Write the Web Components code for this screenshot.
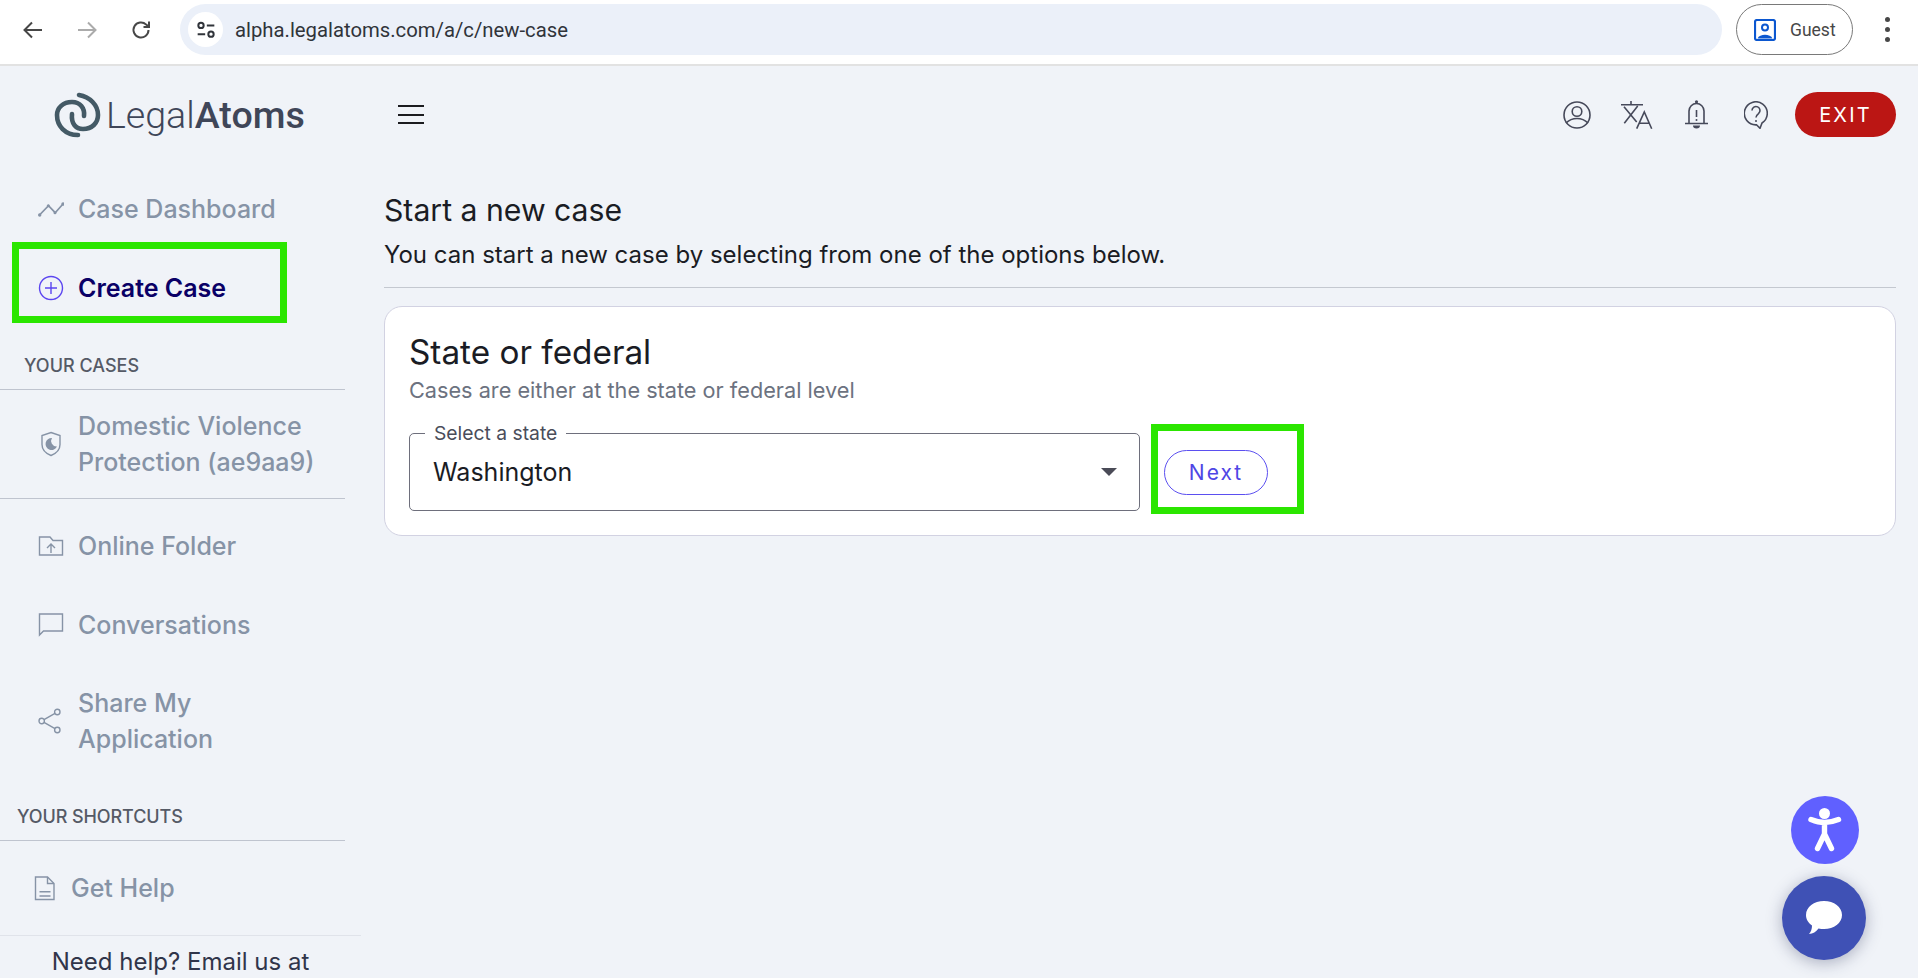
<!doctype html>
<html lang="en">
<head>
<meta charset="utf-8">
<title>LegalAtoms</title>
<style>
html, body { margin: 0; height: 100%; overflow: hidden; background: #f0f3f8; }
body { font-family: Inter, "Noto Sans", sans-serif; }
</style>
</head>
<body>
<browser-bar url="alpha.legalatoms.com/a/c/new-case"></browser-bar>
<app-shell>
  <app-header slot="header"></app-header>
  <side-nav slot="nav">
    <nav-item icon="trend" style="--row:76px">Case Dashboard</nav-item>
    <highlight-box style="--x:12px;--y:-5px;--w:275px;--h:81px"><nav-item icon="plus" active style="--row:82px">Create Case</nav-item></highlight-box>
    <nav-heading style="height:61px">YOUR CASES</nav-heading>
    <nav-item icon="shield" divided style="--row:109px">Domestic Violence<br>Protection (ae9aa9)</nav-item>
    <nav-item icon="folder" style="margin-top:8px">Online Folder</nav-item>
    <nav-item icon="chat" style="margin-top:1px">Conversations</nav-item>
    <nav-item icon="share" style="--row:108px;margin-top:3px">Share My<br>Application</nav-item>
    <nav-heading short style="height:66px">YOUR SHORTCUTS</nav-heading>
    <nav-item icon="doc" tight style="--row:94px">Get Help</nav-item>
    <help-note>Need help? Email us at</help-note>
  </side-nav>
  <new-case-page slot="main"></new-case-page>
</app-shell>
<float-buttons></float-buttons>

<script>
const ICONS = {
  trend: `<path d="M1.500 19l9-9.300 6.700 7L25 8" stroke-width="1.700"/><g stroke="none" fill="#8693a6"><circle cx="1.700" cy="19" r="1.700"/><circle cx="10.300" cy="9.700" r="1.500"/><circle cx="17" cy="16.700" r="1.500"/><circle cx="25" cy="8" r="1.700"/></g>`,
  plus: `<circle cx="13" cy="13" r="11.500"/><path d="M13 7v12M7 13h12"/>`,
  shield: `<path d="M13 1.500l9 3v9c0 5.500-4 9-9 11-5-2-9-5.500-9-11v-9z"/><path d="M14 7a6 6 0 1 0 5 8.500 5.500 5.500 0 0 1-5-8.500z" fill="#8693a6" stroke="none"/>`,
  folder: `<path d="M1.500 4h10.500l3 3.500H24.500V22H1.500z"/><path d="M13 20v-9M9 15l4-4 4 4"/>`,
  chat: `<path d="M1.500 2H24.500V19H5.500L1.500 23z"/>`,
  share: `<circle cx="3.700" cy="13" r="2.700"/><circle cx="19.300" cy="4" r="2.700"/><circle cx="19.300" cy="22" r="2.700"/><path d="M6 11.700L17 5.300M6 14.300L17 20.700"/>`,
  doc: `<path d="M3.500 2H15.500L22 8.500V24.500H3.500z"/><path d="M15.500 2V8.500H22M7.500 16.700h11M7.500 21h11"/>`,
};

const browserBarTemplate = document.createElement("template");
browserBarTemplate.innerHTML = `
<style>
:host {
  display: flex;
  align-items: center;
  box-sizing: border-box;
  height: 66px;
  padding-top: 4px;
  padding-bottom: 9px;
  background: #fff;
  border-bottom: 2px solid #e2e2e2;
  font-family: Roboto, sans-serif;
}
.nav { display: flex; gap: 30px; box-sizing: border-box; width: 180px; padding-left: 21px; flex: none; }
.nav svg { width: 24px; height: 24px; fill: none; stroke: #474747; stroke-width: 2; }
.nav svg.off { stroke: #ababab; }
.pill {
  flex: none;
  display: flex;
  align-items: center;
  box-sizing: border-box;
  width: 1542px;
  height: 51px;
  padding-left: 8px;
  border-radius: 26px;
  background: #ebf0f9;
  font-size: 20.300px;
  color: #30343a;
}
.tune {
  display: flex;
  align-items: center;
  justify-content: center;
  width: 35px;
  height: 35px;
  margin-right: 12px;
  border-radius: 50%;
  background: #fff;
}
.guest {
  display: flex;
  align-items: center;
  box-sizing: border-box;
  width: 117px;
  height: 51px;
  margin-left: 14px;
  padding-left: 17px;
  border: 1.500px solid #797979;
  border-radius: 26px;
  font-size: 17.500px;
  color: #474747;
}
.guest svg { margin-right: 14px; }
.dots { display: grid; gap: 5px; margin-left: 32px; }
.dots i { width: 5px; height: 5px; border-radius: 50%; background: #474747; }
</style>
<div class="nav">
  <svg viewBox="0 0 24 24"><path d="M21 12H4M11 4.500L3.500 12l7.500 7.500"/></svg>
  <svg class="off" viewBox="0 0 24 24"><path d="M3 12h17M13 4.500l7.500 7.500-7.500 7.500"/></svg>
  <svg viewBox="0 0 24 24"><path d="M19.500 12a7.500 7.500 0 1 1-2.300-5.400L20 9M20 3.500V9h-5.500"/></svg>
</div>
<div class="pill">
  <span class="tune"><svg width="20" height="20" viewBox="0 0 24 24" fill="none" stroke="#30343a" stroke-width="2.400"><circle cx="6" cy="6.500" r="3.200"/><path d="M13 6.500h9M2 17h9"/><circle cx="18" cy="17" r="3.200"/></svg></span>
  <span id="url"></span>
</div>
<div class="guest">
  <svg width="22" height="22" viewBox="0 0 22 22"><rect x="1" y="1" width="20" height="20" rx="2" fill="none" stroke="#0b57d0" stroke-width="2.200"/><circle cx="11" cy="8.500" r="3" fill="none" stroke="#0b57d0" stroke-width="2"/><path d="M3.500 19.500c2-5 13-5 15 0z" fill="#0b57d0"/></svg>
  Guest
</div>
<div class="dots"><i></i><i></i><i></i></div>
`;

class BrowserBar extends HTMLElement {
  constructor() {
    super();
    this.attachShadow({ mode: "open" });
    this.shadowRoot.appendChild(browserBarTemplate.content.cloneNode(true));
    this.shadowRoot.querySelector("#url").textContent = this.getAttribute("url");
  }
}
customElements.define("browser-bar", BrowserBar);

const appShellTemplate = document.createElement("template");
appShellTemplate.innerHTML = `
<style>
:host {
  display: grid;
  grid-template-columns: 384px 1fr;
  grid-template-rows: 98px 1fr;
  height: 912px;
}
.header { grid-column: 1 / 3; }
.main { padding-right: 22px; padding-top: 24px; }
</style>
<div class="header"><slot name="header"></slot></div>
<div class="nav"><slot name="nav"></slot></div>
<div class="main"><slot name="main"></slot></div>
`;

class AppShell extends HTMLElement {
  constructor() {
    super();
    this.attachShadow({ mode: "open" });
    this.shadowRoot.appendChild(appShellTemplate.content.cloneNode(true));
  }
}
customElements.define("app-shell", AppShell);

const appHeaderTemplate = document.createElement("template");
appHeaderTemplate.innerHTML = `
<style>
:host {
  display: flex;
  align-items: center;
  box-sizing: border-box;
  height: 98px;
  padding: 0 22px 1px 51px;
}
.logo { display: flex; align-items: center; width: 347px; }
.word {
  margin-left: -5px;
  font-family: Roboto, sans-serif;
  font-size: 37.600px;
  font-weight: 300;
  color: #3f4658;
}
.word b { font-weight: 500; }
.burger { display: grid; gap: 6.500px; width: 26px; }
.burger i { height: 2px; background: #1b1b1f; }
.tools { display: flex; align-items: center; margin-left: auto; }
.tools svg { display: block; fill: none; stroke: #46495a; stroke-width: 1.600; }
.exit {
  display: flex;
  align-items: center;
  justify-content: center;
  width: 101px;
  height: 45px;
  margin-left: 27px;
  border-radius: 23px;
  background: #bb1614;
  color: #fff;
  font-size: 20px;
  letter-spacing: 2.200px;
}
</style>
<div class="logo">
  <svg width="60" height="58" viewBox="0 0 60 58" fill="none" stroke="#445a66" stroke-width="4.600" stroke-linecap="round">
    <path d="M27 49C14 49 6 40 6 29 6 22 12 16 21 16 29 16 34 22 33 30"/>
    <path d="M28 9C39 11 47 19 47 29 47 37 41 43 32 43 25 43 20 38 21 28"/>
  </svg>
  <span class="word">Legal<b>Atoms</b></span>
</div>
<div class="burger"><i></i><i></i><i></i></div>
<div class="tools">
  <svg width="28" height="28" viewBox="0 0 28 28"><circle cx="14" cy="14" r="13"/><circle cx="14" cy="10.500" r="4.800"/><path d="M3 22c6-6 16-6 22 0"/></svg>
  <svg style="margin-left:30px" width="32" height="28" viewBox="0 0 32 28"><path d="M0 3.700h22M10 0v3.700M3 5.700L15.700 21M16.700 5L3.300 22.300M15.700 27.700L23.300 11l7.400 16.700M18 22.300h10.300"/></svg>
  <svg style="margin-left:32px" width="23" height="29" viewBox="0 0 23 29"><path d="M4 23V11a7.500 7.500 0 0 1 15 0v12M0 23.500h23M11.500 10v7"/><circle cx="11.500" cy="20" r="1" fill="#46495a" stroke="none"/><circle cx="11.500" cy="1.800" r="1.600" fill="#46495a" stroke="none"/><path d="M8 25.500h7a3.500 3 0 0 1-7 0z" fill="#46495a" stroke="none"/></svg>
  <svg style="margin-left:36px" width="24" height="28" viewBox="0 0 24 28"><path d="M18 22L16 27.300 12.500 23.800A11.500 11.500 0 1 1 18 22z"/><path d="M8 9.500a4 4 0 1 1 6.500 3.100c-1.500 1.100-2.500 2-2.500 4"/><circle cx="12" cy="20" r="1" fill="#46495a" stroke="none"/></svg>
  <div class="exit">EXIT</div>
</div>
`;

class AppHeader extends HTMLElement {
  constructor() {
    super();
    this.attachShadow({ mode: "open" });
    this.shadowRoot.appendChild(appHeaderTemplate.content.cloneNode(true));
  }
}
customElements.define("app-header", AppHeader);

const sideNavTemplate = document.createElement("template");
sideNavTemplate.innerHTML = `
<style>
:host { display: block; width: 345px; padding-top: 7px; }
</style>
<slot></slot>
`;

class SideNav extends HTMLElement {
  constructor() {
    super();
    this.attachShadow({ mode: "open" });
    this.shadowRoot.appendChild(sideNavTemplate.content.cloneNode(true));
  }
}
customElements.define("side-nav", SideNav);

const navItemTemplate = document.createElement("template");
navItemTemplate.innerHTML = `
<style>
:host {
  display: flex;
  align-items: center;
  box-sizing: border-box;
  min-height: var(--row, 78px);
  padding-left: 38px;
  color: #8693a6;
  font-size: 25px;
  font-weight: 500;
  line-height: 36px;
}
:host([active]) { color: #0a0066; font-weight: 600; }
:host([divided]) { border-bottom: 1px solid #bfc4cf; }
:host([tight]) { padding-left: 32px; }
svg { flex: none; width: 26px; height: 26px; margin-right: 14px; fill: none; stroke: #8693a6; stroke-width: 1.400; }
svg.plus { stroke: #5b45f0; }
:host([tight]) svg { margin-right: 13px; }
</style>
<svg viewBox="0 0 26 26"></svg>
<span><slot></slot></span>
`;

class NavItem extends HTMLElement {
  constructor() {
    super();
    this.attachShadow({ mode: "open" });
    this.shadowRoot.appendChild(navItemTemplate.content.cloneNode(true));
    const name = this.getAttribute("icon");
    const svg = this.shadowRoot.querySelector("svg");
    svg.innerHTML = ICONS[name];
    svg.classList.add(name);
  }
}
customElements.define("nav-item", NavItem);

const navHeadingTemplate = document.createElement("template");
navHeadingTemplate.innerHTML = `
<style>
:host {
  display: flex;
  align-items: flex-end;
  box-sizing: border-box;
  padding: 0 0 13px 24px;
  border-bottom: 1px solid #bfc4cf;
  color: #555a66;
  font-size: 18px;
  font-weight: 500;
}
:host([short]) { padding-left: 17px; letter-spacing: -0.100px; }
</style>
<slot></slot>
`;

class NavHeading extends HTMLElement {
  constructor() {
    super();
    this.attachShadow({ mode: "open" });
    this.shadowRoot.appendChild(navHeadingTemplate.content.cloneNode(true));
  }
}
customElements.define("nav-heading", NavHeading);

const helpNoteTemplate = document.createElement("template");
helpNoteTemplate.innerHTML = `
<style>
:host {
  display: block;
  box-sizing: border-box;
  width: 361px;
  padding-top: 11px;
  border-top: 1px solid #e0e3ea;
  color: #30354a;
  font-size: 24px;
  line-height: 29px;
  text-align: center;
}
</style>
<slot></slot>
`;

class HelpNote extends HTMLElement {
  constructor() {
    super();
    this.attachShadow({ mode: "open" });
    this.shadowRoot.appendChild(helpNoteTemplate.content.cloneNode(true));
  }
}
customElements.define("help-note", HelpNote);

const highlightBoxTemplate = document.createElement("template");
highlightBoxTemplate.innerHTML = `
<style>
:host { display: block; position: relative; }
.mark {
  position: absolute;
  left: var(--x);
  top: var(--y);
  box-sizing: border-box;
  width: var(--w);
  height: var(--h);
  border: 7px solid #2be600;
  pointer-events: none;
}
</style>
<slot></slot>
<div class="mark"></div>
`;

class HighlightBox extends HTMLElement {
  constructor() {
    super();
    this.attachShadow({ mode: "open" });
    this.shadowRoot.appendChild(highlightBoxTemplate.content.cloneNode(true));
  }
}
customElements.define("highlight-box", HighlightBox);

const newCasePageTemplate = document.createElement("template");
newCasePageTemplate.innerHTML = `
<style>
:host { display: block; color: #1a1c24; }
h1 { margin: 0; font-size: 30.200px; font-weight: 400; line-height: 44px; }
.lead { margin: 0; font-size: 24px; line-height: 46px; height: 45px; }
hr { margin: 10px 0 18px; border: 0; border-top: 1px solid #c4c8d0; }
.card {
  box-sizing: border-box;
  height: 230px;
  padding: 23px 24px 0;
  border: 1px solid #d2d2e2;
  border-radius: 18px;
  background: #fff;
}
h2 { margin: 0; font-size: 33.300px; font-weight: 400; line-height: 44px; }
.sub { margin: 0; color: #6c7280; font-size: 21.700px; line-height: 33px; }
.row { display: flex; align-items: center; margin-top: 26px; }
</style>
<h1>Start a new case</h1>
<p class="lead">You can start a new case by selecting from one of the options below.</p>
<hr>
<section class="card">
  <h2>State or federal</h2>
  <p class="sub">Cases are either at the state or federal level</p>
  <div class="row">
    <state-select label="Select a state" value="Washington"></state-select>
    <highlight-box style="--x:-13px;--y:-26px;--w:153px;--h:90px;margin-left:24px"><pill-button>Next</pill-button></highlight-box>
  </div>
</section>
`;

class NewCasePage extends HTMLElement {
  constructor() {
    super();
    this.attachShadow({ mode: "open" });
    this.shadowRoot.appendChild(newCasePageTemplate.content.cloneNode(true));
  }
}
customElements.define("new-case-page", NewCasePage);

const stateSelectTemplate = document.createElement("template");
stateSelectTemplate.innerHTML = `
<style>
:host {
  display: flex;
  align-items: center;
  position: relative;
  box-sizing: border-box;
  width: 731px;
  height: 78px;
  padding: 0 22px 0 23px;
  border: 1px solid #6e6f7c;
  border-radius: 5px;
  color: #1a1c24;
  font-size: 25px;
}
.label {
  position: absolute;
  left: 15px;
  top: -12px;
  padding: 0 9px;
  background: #fff;
  color: #4a4d5a;
  font-size: 19.300px;
  line-height: 22px;
}
.arrow {
  margin-left: auto;
  border-left: 8px solid transparent;
  border-right: 8px solid transparent;
  border-top: 8px solid #4a4b57;
}
</style>
<span class="label"></span>
<span class="value"></span>
<span class="arrow"></span>
`;

class StateSelect extends HTMLElement {
  constructor() {
    super();
    this.attachShadow({ mode: "open" });
    this.shadowRoot.appendChild(stateSelectTemplate.content.cloneNode(true));
    this.shadowRoot.querySelector(".label").textContent = this.getAttribute("label");
    this.shadowRoot.querySelector(".value").textContent = this.getAttribute("value");
  }
}
customElements.define("state-select", StateSelect);

const pillButtonTemplate = document.createElement("template");
pillButtonTemplate.innerHTML = `
<style>
:host {
  display: flex;
  align-items: center;
  justify-content: center;
  box-sizing: border-box;
  width: 104px;
  height: 45px;
  border: 1px solid #5b4ff0;
  border-radius: 23px;
  color: #4f46e5;
  font-size: 21px;
  letter-spacing: 2px;
}
</style>
<slot></slot>
`;

class PillButton extends HTMLElement {
  constructor() {
    super();
    this.attachShadow({ mode: "open" });
    this.shadowRoot.appendChild(pillButtonTemplate.content.cloneNode(true));
  }
}
customElements.define("pill-button", PillButton);

const floatButtonsTemplate = document.createElement("template");
floatButtonsTemplate.innerHTML = `
<style>
:host {
  position: fixed;
  right: 52px;
  bottom: 18px;
  display: grid;
  justify-items: center;
  gap: 12px;
}
.a11y {
  width: 68px;
  height: 68px;
  margin-left: 2px;
  border-radius: 50%;
  background: #6060ff;
}
.a11y svg { display: block; }
.chat {
  display: flex;
  align-items: center;
  justify-content: center;
  width: 84px;
  height: 84px;
  border-radius: 50%;
  background: #3f51b5;
  box-shadow: 0 3px 16px rgba(40, 50, 90, .35);
}
</style>
<div class="a11y">
  <svg width="68" height="68" viewBox="0 0 68 68" fill="none" stroke="#fff" stroke-width="5.400" stroke-linecap="round" stroke-linejoin="round"><circle cx="33.500" cy="17.500" r="5.500" fill="#fff" stroke="none"/><path d="M20 23.500c5 2 9 3 13.500 3s9-1 14-3M33.500 26.500v12M33.500 38L26.500 52.500M33.500 38L40.500 52.500"/></svg>
</div>
<div class="chat">
  <svg width="38" height="36" viewBox="0 0 38 36"><path d="M19 1c10 0 18 6 18 14S29 29 19 29c-2 0-3.500 0-5.500-.5C11 31.500 8 34 4 34c2-2 3-5 3-8.500C3.500 23 1 19.500 1 15 1 7 9 1 19 1z" fill="#fff"/></svg>
</div>
`;

class FloatButtons extends HTMLElement {
  constructor() {
    super();
    this.attachShadow({ mode: "open" });
    this.shadowRoot.appendChild(floatButtonsTemplate.content.cloneNode(true));
  }
}
customElements.define("float-buttons", FloatButtons);
</script>
</body>
</html>
